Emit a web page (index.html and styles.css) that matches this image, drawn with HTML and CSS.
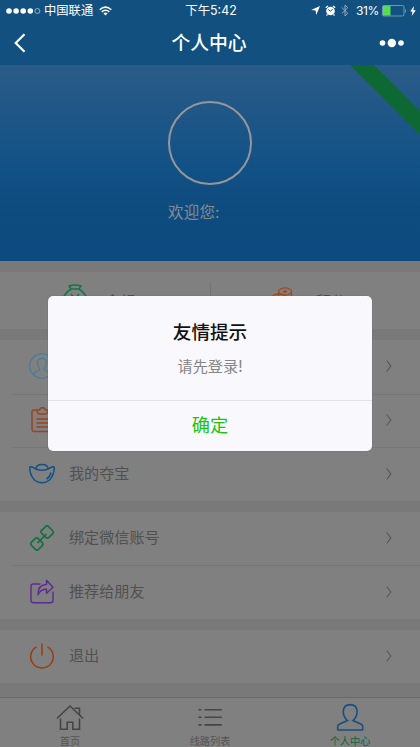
FILE: index.html
```html
<!DOCTYPE html>
<html lang="zh-CN">
<head>
<meta charset="utf-8">
<title>个人中心</title>
<link rel="stylesheet" href="styles.css">
</head>
<body>
<div class="screen">
  <header class="top">
    <div class="status">
      <div class="carrier">
        <svg class="signal" width="35" height="8" viewBox="0 0 35 8"><g fill="#fff"><circle cx="3" cy="4" r="2.8"/><circle cx="10.1" cy="4" r="2.8"/><circle cx="17.2" cy="4" r="2.8"/><circle cx="24.3" cy="4" r="2.8"/></g><circle cx="31.4" cy="4" r="2.5" fill="none" stroke="#b7cad9" stroke-width=".8"/></svg>
        <span>中国联通</span>
        <svg class="wifi" width="13" height="10" viewBox="0 0 13 10" fill="none" stroke="#fff" stroke-width="1.5"><path d="M.7 3.7Q6.5-1.5 12.3 3.7M2.7 5.9Q6.5 2.5 10.3 5.9"/><path d="M4.4 7.4Q6.5 5.7 8.6 7.4L6.5 9.6z" fill="#fff" stroke="none"/></svg>
      </div>
      <div class="time">下午5:42</div>
      <div class="power">
        <svg width="9" height="9" viewBox="0 0 9 9"><path d="M9 0L5.2 9 4.6 4.6.2 4z" fill="#fff"/></svg>
        <svg class="alarm" width="11" height="11" viewBox="0 0 11 11"><circle cx="5.5" cy="6" r="4.3" fill="#fff"/><path d="M.8 2.7L3 .9M10.2 2.7L8 .9M2.500 9.300l-1 1.200M8.500 9.300l1 1.200" stroke="#fff" stroke-width="1.3"/><path d="M3.3 4.500l2.200 1.700 2-2" fill="none" stroke="#12507f" stroke-width="1"/></svg>
        <svg class="bluetooth" width="8" height="13" viewBox="0 0 8 13"><path d="M.8 3.500l6 5.800L4 12V1l2.800 2.700-6 5.800" fill="none" stroke="#8eabc2" stroke-width="1"/></svg>
        <span>31%</span>
        <svg class="battery" width="25" height="12" viewBox="0 0 25 12"><rect x=".5" y=".5" width="21.5" height="10.5" rx="1.5" fill="none" stroke="#8eabc2" stroke-width=".8"/><path d="M1 1h7.5v9.500H1z" fill="#58dc57"/><path d="M23.200 3.500q1.800 2.300 0 4.600z" fill="#8eabc2"/></svg>
        <svg class="bolt" width="6" height="10" viewBox="0 0 6 10"><path d="M4 0L.2 5.400h2.300L1.700 10 5.800 4.200H3.400z" fill="#fff"/></svg>
      </div>
    </div>
    <nav class="nav">
      <svg class="back" width="12" height="20" viewBox="0 0 12 20"><path d="M10.500 1.200L1.700 10l8.800 8.800" fill="none" stroke="#fff" stroke-width="2.200"/></svg>
      <h1>个人中心</h1>
      <svg class="more" width="26" height="10" viewBox="0 0 26 10" fill="#fff"><circle cx="3.500" cy="5" r="2.800"/><circle cx="12.800" cy="5" r="4.200"/><circle cx="22" cy="5" r="2.800"/></svg>
    </nav>
  </header>

  <section class="hero">
    <svg class="ribbon" width="70" height="70" viewBox="0 0 70 70"><path d="M0 0h24l46 46v24z" fill="#0d6833"/></svg>
    <div class="avatar"></div>
    <p class="welcome">欢迎您:</p>
  </section>

  <section class="stats">
    <div class="stat">
      <svg width="28" height="29" viewBox="0 0 28 29" fill="none" stroke="#107744" stroke-width="1.500"><path d="M10 5L8 2q6-2 12 0l-2 3zM10 5C5 8 1 14 1 19c0 6 4 8 13 8s13-2 13-8c0-5-4-11-9-14M10 10l4 5 4-5M14 15v9M10 18h8"/></svg>
      <span>余额</span>
    </div>
    <div class="stat points">
      <svg width="23" height="26" viewBox="0 0 23 26" fill="none" stroke="#9b4c1f" stroke-width="1.300"><ellipse cx="14" cy="4.500" rx="6.500" ry="3.600"/><path d="M7.500 5v4q6.500 5 13 0V5M14 3v3M12 4.500h4"/><ellipse cx="8" cy="10.500" rx="7" ry="3.500"/><path d="M1 11v11q7 5 14 0V11M1 16q7 5 14 0"/></svg>
      <span>积分</span>
    </div>
  </section>

  <section class="list">
    <div class="row"><svg class="icon" width="26" height="26" viewBox="0 0 26 26" fill="none" stroke="#3d7e9b" stroke-width="1.100"><circle cx="13" cy="13" r="12.300"/><path d="M5 22q0-3 4.500-4.500 2-1 .5-3-1.500-2-1.500-5 0-4 4.500-4t4.500 4q0 3-1.500 5-1.500 2 .5 3 4.500 1.500 4.500 4.500"/></svg><span>个人信息</span><i class="arrow"></i></div>
    <div class="row"><svg class="icon" width="26" height="26" viewBox="0 0 26 26" fill="none" stroke="#9c421c" stroke-width="1.500"><path d="M8 3H5Q3 3 3 5v17.500q0 2 2 2h18q2 0 2-2V5q0-2-2-2H19M8 3q0 4 3 4h5q3 0 3-4h-2.500q-.5-2.300-3-2.300T10.500 3zM7.500 12h13M7.500 16h13M7.500 20h13"/></svg><span>我的订单</span><i class="arrow"></i></div>
    <div class="row"><svg class="icon" width="26" height="26" viewBox="0 0 26 26" fill="none" stroke="#12518a" stroke-width="1.500"><path d="M.8 7Q.5 5.500 2.500 5.800L7 8q6 2.500 12 0l4.500-2.200q2-.3 1.800 1.200-.3 7.500-4.800 12-3 2.700-7.500 2.700T5.500 19Q1 14.500.8 7zM7 8q0-4.500 6-4.500T19 8M22 11.500q-1 4.500-4.500 6.500"/></svg><span>我的夺宝</span><i class="arrow"></i></div>
  </section>

  <section class="list">
    <div class="row"><svg class="icon" width="26" height="26" viewBox="0 0 26 26" fill="none" stroke="#10713d" stroke-width="1.700"><rect x="13.200" y="2.200" width="10" height="9.600" rx="2" transform="rotate(45 18.200 7)"/><rect x="2.800" y="14.200" width="10" height="9.600" rx="2" transform="rotate(45 7.800 19)"/><path d="M8.500 18l9-9"/></svg><span>绑定微信账号</span><i class="arrow"></i></div>
    <div class="row"><svg class="icon" width="26" height="26" viewBox="0 0 26 26" fill="none" stroke="#5a2b91" stroke-width="1.400" stroke-linejoin="round"><path d="M11.500 5H4.500Q2 5 2 7.500v13.700Q2 23.700 4.500 23.700h17q2.500 0 2.500-2.500V12.500M9 15.800Q9 5.500 17.500 5.500V1.300L24 8.300l-6.500 6v-4Q11.500 10.300 9 15.800z"/></svg><span>推荐给朋友</span><i class="arrow"></i></div>
  </section>

  <section class="list">
    <div class="row"><svg class="icon" width="26" height="26" viewBox="0 0 26 26" fill="none" stroke="#9c3a13" stroke-width="1.500"><path d="M7.500 3.800a11.300 11.300 0 1 0 11 0M13 .5v12"/></svg><span>退出</span><i class="arrow"></i></div>
  </section>

  <footer class="tabs">
    <div class="tab"><svg width="28" height="28" viewBox="0 0 28 28" fill="none" stroke="#454545" stroke-width="1.600"><path d="M.9 15.500L14 3l13.100 12.500M4.500 15.500V26.200h6.700v-7h5.600v7h6.700V15.500M18.500 5.200h5v6.500"/></svg><span>首页</span></div>
    <div class="tab"><svg width="28" height="28" viewBox="0 0 28 28" fill="none" stroke="#454545" stroke-width="1.600"><path d="M2.500 6.800h3M8.500 6.800h17.300M2.500 14.300h3M8.500 14.300h17.300M2.500 21.900h3M8.500 21.900h17.300"/></svg><span>线路列表</span></div>
    <div class="tab current"><svg width="28" height="28" viewBox="0 0 28 28" fill="none" stroke="#144f80" stroke-width="1.600"><path d="M11.500 17.600c-3-2.600-4.200-5.600-4.200-8.800 0-4.500 2.500-7.200 6.900-7.200s6.900 2.700 6.900 7.200c0 3.200-1.200 6.200-4.200 8.800l8.300 3.600q1.500.700 1.500 2.300v2.800Q26.700 27 26 27H2.400q-.7 0-.7-.7v-2.800q0-1.600 1.500-2.300z"/></svg><span>个人中心</span></div>
  </footer>

  <div class="dialog" role="dialog">
    <h2>友情提示</h2>
    <p>请先登录!</p>
    <button type="button">确定</button>
  </div>
</div>
</body>
</html>
```
FILE: styles.css
```css
* { box-sizing: border-box; }
body, h1, h2, p { margin: 0; }
body { font-family: Inter, "Noto Sans CJK SC", sans-serif; background: #797979; }
svg { display: block; flex: none; }
.screen { position: relative; width: 420px; height: 747px; overflow: hidden; display: flex; flex-direction: column; background: #797979; }

.top { height: 65px; flex: none; background: #12507f; color: #fff; }
.status { height: 21px; display: grid; grid-template-columns: 1fr auto 1fr; align-items: center; padding: 0 4px 0 6px; font-size: 12.3px; line-height: 20px; }
.carrier { display: flex; align-items: center; }
.carrier span { margin-left: 3px; }
.wifi { margin-left: 6px; }
.time { font-size: 12.4px; }
.power { display: flex; align-items: center; justify-content: flex-end; font-size: 12px; }
.alarm { margin-left: 5px; }
.bluetooth { margin-left: 5px; }
.power span { margin: 0 3px 0 7px; letter-spacing: -.4px; }
.bolt { margin-left: 3px; }
.nav { height: 44px; display: grid; grid-template-columns: 1fr auto 1fr; align-items: center; padding: 0 16px 0 14px; }
.nav h1 { font-size: 18.8px; line-height: 28px; font-weight: 500; padding-top: 2px; }
.more { justify-self: end; margin-right: -1px; }

.hero { position: relative; height: 196px; flex: none; padding-top: 36px; background: linear-gradient(#2b5c88 0, #1e5686 26%, #125186 52%, #0e4b7d 75%, #0c4a80 100%); }
.ribbon { position: absolute; top: 0; right: 0; }
.avatar { width: 84px; height: 84px; margin: 0 auto; border: 2px solid #969799; border-radius: 50%; }
.welcome { margin: 16px 0 0 168px; color: #858b93; font-size: 15.5px; line-height: 24px; letter-spacing: .2px; }

.stats { height: 57px; flex: none; margin-top: 11px; display: grid; grid-template-columns: 1fr 1fr; background: #808080; }
.stat { display: flex; padding: 12px 0 0 61px; color: #3d4f5d; font-size: 15px; line-height: 22px; position: relative; }
.stat span { margin: 7px 0 0 16px; }
.points::before { content: ""; position: absolute; left: 0; top: 11px; height: 35px; border-left: 1px solid #747474; }
.points svg { margin-top: 3px; }
.points span { margin-left: 22px; }

.list { flex: none; margin-top: 11px; background: #808080; }
.row { height: 53.7px; display: flex; align-items: center; padding: 0 27px 1px 29px; position: relative; color: #505050; font-size: 15.1px; }
.list + .list .row { height: 53.3px; }
.row + .row::before { content: ""; position: absolute; left: 12px; right: 0; top: 0; border-top: 1px solid #777; }
.row span { flex: 1; margin-left: 14px; line-height: 24px; }
.arrow { width: 8px; height: 8px; border: solid #505050; border-width: 1px 1px 0 0; transform: translateX(-2px) scaleX(.78) rotate(45deg); }

.tabs { height: 50px; flex: none; margin-top: auto; display: grid; grid-template-columns: repeat(3, 1fr); border-top: 1px solid #686868; background: #808080; }
.tab { display: flex; flex-direction: column; align-items: center; padding-top: 5px; color: #545454; font-size: 10.2px; line-height: 14px; }
.tab span { margin-top: 3px; }
.current { color: #0c653c; }

.dialog { position: absolute; left: 48px; top: 296px; width: 324px; height: 155px; border-radius: 5px; background: #f9f8fc; text-align: center; box-shadow: 0 0 1px #555; padding-top: 22px; }
.dialog h2 { color: #111; font-size: 18.6px; line-height: 28px; font-weight: 500; }
.dialog p { margin-top: 9px; height: 45px; color: #838589; font-size: 15.2px; line-height: 24px; }
.dialog button { display: block; width: 100%; height: 50px; border: 0; border-top: 1px solid #e4e4e8; padding: 0 0 3px; background: none; color: #22c30b; font: inherit; font-size: 18.2px; }
```
